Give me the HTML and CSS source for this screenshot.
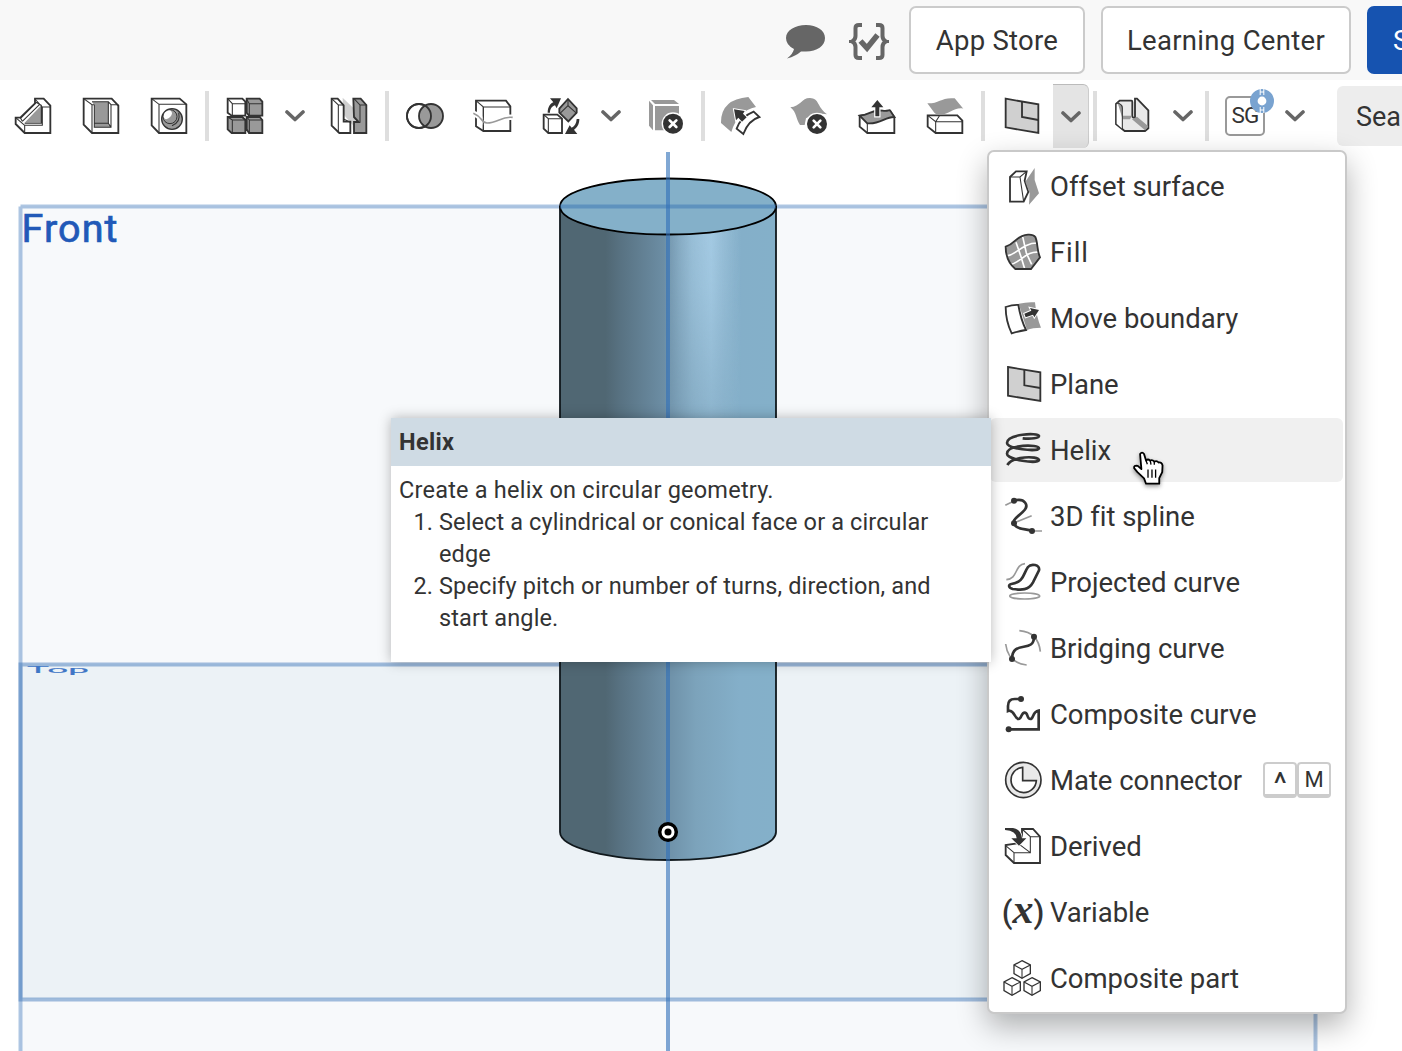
FILE: index.html
```html
<!DOCTYPE html>
<html lang="en">
<head>
<meta charset="utf-8">
<title>Part Studio</title>
<link rel="stylesheet" href="styles.css">
</head>
<body>
<div class="app">
<header class="topbar">
  <svg class="topicon" viewBox="0 0 40 40"><path d="M20 5C31 5 39 10.500 39 18C39 26 31 31.500 20 31.500L15 31.500Q10 36 1 38.500Q7 34 8 29Q0 25 0 18C0 10.500 9 5 20 5Z" fill="#666"/></svg>
  <svg class="topicon checks" viewBox="0 0 40 40"><g fill="none" stroke="#666" stroke-width="4"><path d="M13 5H10Q6.500 5 6.500 8V16Q6.500 20 3 21.500Q6.500 23 6.500 27V35Q6.500 38 10 38H13M27 5H30Q33.500 5 33.500 8V16Q33.500 20 37 21.500Q33.500 23 33.500 27V35Q33.500 38 30 38H27"/><path d="M11.500 21L18 28L28.500 15" stroke-width="5.500"/></g><path d="M0 20H5V23H0ZM35 20H40V23H35Z" fill="#666"/></svg>
  <button class="btn app-store">App Store</button>
  <button class="btn learning">Learning Center</button>
  <button class="btn share">Share</button>
</header>

<nav class="toolbar">
  <span class="tool"><svg viewBox="39 48 120 120"><path class="w" d="M105 56H131L151 77V159H74L47 132V113H61L105 70Z"/><path class="g" d="M124 76V128H74Z"/><path class="n" d="M61 116L108 68M67 124L119 73M61 113L67 124M105 57L127 81H151M127 81V136H74V159M47 113L74 136M74 130H124V76L108 67"/></svg></span>
  <span class="tool"><svg viewBox="243 48 120 120"><path class="w" d="M251 56H335L355 77V159H276L251 134Z"/><path class="g" d="M276 65H325V135L333 142H283V76Z"/><path class="n" d="M251 56L276 74H283M276 74V159M276 65H325L333 74H355M283 74V142H333V74M325 65V130H283M325 130L333 142"/></svg></span>
  <span class="tool"><svg viewBox="447 48 120 120"><path class="w" d="M455 56H539L559 73V159H477L455 136Z"/><path class="n" d="M455 56L477 73H559M477 73V159"/><circle cx="516" cy="117" r="31" fill="#999" stroke="#333" stroke-width="4"/><circle cx="510" cy="110" r="21" fill="#999" stroke="#333" stroke-width="3"/><path d="M491 111Q490 95 507 91Q516 92 516 101Q512 114 498 118Q492 116 491 111Z" fill="#fff"/><path class="n" d="M536 98Q543 127 516 137"/></svg></span>
  <i class="sep"></i>
  <span class="tool"><svg viewBox="675 48 120 120"><path class="w" d="M683 56H727L736 65V107H695L683 98Z"/><path class="gs" d="M740 56H779L787 65V107H747L740 98ZM683 111H727L736 120V159H695L683 148ZM740 111H779L787 120V159H747L740 148Z"/><path class="n" d="M683 56L697 71H736M697 71V106M740 58L748 71H787M748 71V106M683 111L697 120H736M697 120V159M740 111L748 120H787M748 120V159"/></svg></span>
  <span class="chev"><svg viewBox="0 0 20 12"><path d="M2 2L10 9.500L18 2"/></svg></span>
  <span class="tool"><svg viewBox="987 48 120 120"><path d="M1028 53L1067 91V130L1058 150V135L1030 103Z" fill="#cfcfcf"/><path class="w" d="M995 56H1013L1031 76V125H1051V159H1018L995 137Z"/><path class="gs" d="M1060 56H1082L1099 75V159H1062V126H1076L1062 111Z"/><path class="n" d="M995 56L1015 75H1031M1015 75V159M1032 118L1051 127M1062 56L1080 75H1099M1080 75V127"/></svg></span>
  <i class="sep"></i>
  <span class="tool"><svg viewBox="45 48 120 120"><circle cx="87" cy="108" r="36" class="w"/><circle cx="123" cy="108" r="36" class="gs"/><circle cx="87" cy="108" r="36" class="d"/></svg></span>
  <span class="tool"><svg viewBox="249 48 120 120"><path class="w" d="M258 62H348L361 79V153H280L258 139Z"/><path class="n" d="M258 62L280 81H361M280 81V153"/><path d="M250 100C280 112 272 129 291 129C324 129 335 108 368 112" fill="none" stroke="#fff" stroke-width="16"/><path d="M280 81V153" class="n"/><path d="M250 100C280 112 272 129 291 129C324 129 335 108 368 112" fill="none" stroke="#999" stroke-width="5"/></svg></span>
  <span class="tool"><svg viewBox="453 48 120 120"><path class="w" d="M461 104H502L516 116V159H475L461 146Z"/><path class="n" d="M461 104L475 116H516M475 116V159"/><path class="gs" d="M534 57L560 85V98L535 124L508 98V86Z"/><path class="n" d="M534 57V77L560 100M534 77L510 100"/><path d="M473 98C473 82 481 70 490 67L480 55H513L500 85L495 76C484 80 480 88 480 98ZM568 117C568 134 560 144 552 149L562 162H525L539 136L545 143C555 138 559 130 560 117Z" fill="#333"/></svg></span>
  <span class="chev"><svg viewBox="0 0 20 12"><path d="M2 2L10 9.500L18 2"/></svg></span>
  <span class="tool"><svg viewBox="765 48 120 120"><path d="M777 62L789 76V151L777 137ZM783 60H852L867 72H795ZM795 78H867V151H795Z" fill="#999"/><circle cx="849" cy="131" r="34" fill="#fff"/><circle cx="849" cy="131" r="30" fill="#333"/><path d="M839 121L859 141M859 121L839 141" stroke="#fff" stroke-width="8" stroke-linecap="round"/></svg></span>
  <i class="sep"></i>
  <span class="tool"><svg viewBox="63 48 120 120"><path d="M145 51L168 81Q113 92 94 156L63 129Q62 58 145 51Z" fill="#999"/><path class="w" d="M161 95L178 111Q145 121 130 162L110 146Q123 110 161 95Z"/><path d="M102 88L134 93L129 101L140 112L126 125L115 113L108 121Z" fill="#333" stroke="#fff" stroke-width="6" paint-order="stroke"/></svg></span>
  <span class="tool"><svg viewBox="267 48 120 120"><path d="M271 82C301 80 306 53 330 54C358 55 349 78 381 103L350 100L318 115L314 135H300C287 116 291 98 271 82Z" fill="#999"/><circle cx="351" cy="132" r="34" fill="#fff"/><circle cx="351" cy="132" r="30" fill="#333"/><path d="M341 122L361 142M361 122L341 142" stroke="#fff" stroke-width="8" stroke-linecap="round"/></svg></span>
  <span class="tool"><svg viewBox="471 48 120 120"><path class="w" d="M479 107V140L502 159H583V111L569 92Z"/><path class="gs" d="M479 107C510 105 514 88 548 92C562 95 568 89 570 91L583 111C555 110 541 134 502 130Z"/><path class="n" d="M502 130V159"/><path d="M532 60L550 82H538V109H526V82H514Z" fill="#333" stroke="#fff" stroke-width="7" paint-order="stroke"/></svg></span>
  <span class="tool"><svg viewBox="675 48 120 120"><path class="w" d="M683 106H772L787 122V159H707L683 140Z"/><path class="n" d="M683 106L707 125H787M707 125V159M707 125L718 108"/><path d="M682 70C718 71 724 51 764 55L790 86C764 80 745 106 718 105C706 106 703 98 682 70Z" fill="#999"/></svg></span>
  <i class="sep"></i>
  <span class="tool"><svg viewBox="903 48 120 120"><path d="M917 56L1015 73V159L917 142Z" fill="#d0d0d0" stroke="#333" stroke-width="5.500"/><path d="M966 65V111L1015 120" fill="none" stroke="#333" stroke-width="5.500"/></svg></span>
  <span class="chev active"><svg viewBox="0 0 20 12"><path d="M2 2L10 9.500L18 2"/></svg></span>
  <i class="sep"></i>
  <span class="tool"><svg viewBox="69 48 120 120"><path d="M78 72L89 62H124Q127 62 127 66V108Q128 115 135 113V56H141L175 91V145L165 153H104L78 132Z" fill="#e9e9e9" stroke="#333" stroke-width="5.500"/><path d="M80 72L97 83V146L80 131Z" fill="#fff"/><path d="M82 66L98 77V107H126L120 118H98ZM141 110L175 139L165 151L126 118Z" fill="#999"/><path class="n" d="M81 68Q97 72 97 84V147"/></svg></span>
  <span class="chev"><svg viewBox="0 0 20 12"><path d="M2 2L10 9.500L18 2"/></svg></span>
  <i class="sep"></i>
  <span class="tool"><span class="sg">SG<svg class="ring" viewBox="0 0 24 24"><circle cx="12" cy="12" r="8.200" fill="#fff" stroke="#79a3d0" stroke-width="7.600"/><path d="M10.200 0V6M13.800 0V6M10.200 18V24M13.800 18V24M10 3H14M10 21H14" stroke="#fff" stroke-width="1"/></svg></span></span>
  <span class="chev"><svg viewBox="0 0 20 12"><path d="M2 2L10 9.500L18 2"/></svg></span>
  <span class="search">Search tools...</span>
</nav>

<main class="stage">
  <svg class="scene" viewBox="0 152 1402 899">
    <defs>
      <linearGradient id="body"><stop offset="0" stop-color="#506773"/><stop offset=".21" stop-color="#506773"/><stop offset=".28" stop-color="#587282"/><stop offset=".49" stop-color="#6d8fa6"/><stop offset=".63" stop-color="#7ca3bb"/><stop offset=".83" stop-color="#84afc9"/><stop offset="1" stop-color="#84b0c9"/></linearGradient>
      <linearGradient id="shine"><stop offset=".48" stop-color="#a9cfe8" stop-opacity="0"/><stop offset=".61" stop-color="#a9cfe8" stop-opacity=".65"/><stop offset=".7" stop-color="#a9cfe8" stop-opacity=".9"/><stop offset=".84" stop-color="#a9cfe8" stop-opacity="0"/></linearGradient>
      <linearGradient id="down" x2="0" y2="1"><stop offset="0" stop-color="#fff"/><stop offset=".25" stop-color="#ddd"/><stop offset=".75" stop-color="#444"/><stop offset="1" stop-color="#000"/></linearGradient>
      <mask id="fade"><rect x="560" y="206" width="216" height="320" fill="url(#down)"/></mask>
    </defs>
    <rect x="20" y="206" width="1296" height="900" fill="#f7f9fb"/>
    <rect x="20" y="664" width="1296" height="335" fill="#ecf2f6"/>
    <g fill="none" stroke="#3e78bb">
      <path d="M20.500 206.500H1315.500V1051M20.500 206.500V1051" stroke-width="4" opacity=".42"/>
      <path d="M1315.500 664.500H20.500V999.500H1315.500" stroke-width="4" opacity=".48"/>
    </g>
    <path d="M560 206A108 28 0 0 1 776 206V832A108 28 0 0 1 560 832Z" fill="url(#body)"/>
    <rect x="560" y="206" width="216" height="320" fill="url(#shine)" mask="url(#fade)"/>
    <path d="M560 206V832A108 28 0 0 0 776 832V206" fill="none" stroke="#10181c" stroke-width="1.800"/>
    <ellipse cx="668" cy="206.500" rx="108" ry="28" fill="#84b0c9" stroke="#000" stroke-width="1.800"/>
    <path d="M560 206.500H776" stroke="#3a75b5" stroke-width="4" opacity=".5"/>
    <path d="M668 152V1051" stroke="#2f6fb9" stroke-width="4" opacity=".6"/>
    <circle cx="668" cy="832" r="8.300" fill="#fff" stroke="#000" stroke-width="3.500"/><circle cx="668" cy="832" r="3.500"/>
    <text class="plane front" x="21.500" y="241.500" textLength="96">Front</text>
    <text class="plane" transform="translate(27 673) scale(1 .27)" font-size="31" textLength="62" lengthAdjust="spacingAndGlyphs">Top</text>
  </svg>
</main>

<ul class="menu">
  <li><svg viewBox="54 48 120 120"><path class="w" d="M75 81L93 64H125L119 92L130 126L116 155H75Z"/><path class="n" d="M75 81H105L125 64M105 81L116 155"/><path d="M149 54V90L162 130L132 164L134 130L121 95Z" fill="#999"/></svg><span>Offset surface</span></li>
  <li><svg viewBox="54 246 120 120"><path d="M62 290C93 281 90 258 129 254Q145 253 151 261C159 278 155 300 165 322L138 357H91C73 342 62 319 62 290Z" fill="#999"/><path d="M64 317C91 319 111 278 158 279M76 344C110 336 124 301 164 307M93 277L108 320L119 356M113 260L124 309L140 343" fill="none" stroke="#fff" stroke-width="5"/><path class="d" d="M62 290C93 281 90 258 129 254Q145 253 151 261C159 278 155 300 165 322L138 357H91C73 342 62 319 62 290Z"/></svg><span class="fill">Fill</span></li>
  <li><svg viewBox="54 444 120 120"><path d="M101 461Q128 455 150 457Q154 500 168 533Q143 533 126 540Z" fill="#999"/><path class="w" d="M62 471Q84 464 100 465Q107 507 123 540Q103 543 80 550Q62 513 62 471Z"/><path d="M118 491L139 482L135 474L162 480L148 502L144 494L122 502Z" fill="#333" stroke="#fff" stroke-width="6" paint-order="stroke"/></svg><span>Move boundary</span></li>
  <li><svg viewBox="54 642 120 120"><path d="M69 651L166 667V753L69 737Z" fill="#d0d0d0" stroke="#333" stroke-width="5.500"/><path d="M118 660V706L166 714" fill="none" stroke="#333" stroke-width="5.500"/></svg><span>Plane</span></li>
  <li class="hover"><svg viewBox="54 45 120 120"><path d="M113 70C139 73 162 69 162 63C158 52 66 57 66 84C66 102 157 111 162 100C161 87 66 88 66 116C66 134 157 148 162 135C158 122 82 123 67 150" fill="none" stroke="#333" stroke-width="8"/></svg><span>Helix</span></li>
  <li><svg viewBox="54 243 120 120"><path d="M61 271L87 258M87 324L140 302M140 348H171" stroke="#999" stroke-width="5" fill="none"/><path d="M87 257C119 248 136 271 113 291C91 310 79 318 90 331C101 344 119 341 141 347" fill="none" stroke="#333" stroke-width="8"/><g fill="#333"><circle cx="87" cy="257" r="9"/><circle cx="87" cy="325" r="9"/><circle cx="141" cy="348" r="9"/></g></svg><span>3D fit spline</span></li>
  <li><svg viewBox="54 441 120 120"><path d="M64 494C100 492 87 449 120 446" fill="none" stroke="#999" stroke-width="5"/><ellipse cx="119" cy="543" rx="45" ry="9" fill="none" stroke="#999" stroke-width="5"/><path d="M79 507C119 500 113 478 129 456C138 445 166 448 162 466L144 502C131 526 110 526 83 522C70 518 69 509 79 507Z" fill="none" stroke="#333" stroke-width="8"/></svg><span>Projected curve</span></li>
  <li><svg viewBox="54 639 120 120"><path d="M103 647Q160 652 166 710M62 687Q69 744 125 750" fill="none" stroke="#999" stroke-width="5"/><path d="M81 732C82 672 147 717 147 665" fill="none" stroke="#333" stroke-width="8"/><circle cx="147" cy="665" r="9" fill="#333"/><circle cx="81" cy="732" r="9" fill="#333"/></svg><span>Bridging curve</span></li>
  <li><svg viewBox="54 42 120 120"><path d="M108 57H89Q69 57 69 78V93C88 86 88 117 101 117C110 117 108 98 119 98C130 98 125 117 136 117C147 117 141 95 161 92V148H71" fill="none" stroke="#333" stroke-width="8"/><circle cx="108" cy="57" r="9" fill="#333"/><circle cx="71" cy="148" r="9" fill="#333"/></svg><span>Composite curve</span></li>
  <li><svg viewBox="54 240 120 120"><circle cx="115" cy="300" r="53" fill="#e9e9e9" stroke="#333" stroke-width="5"/><path d="M113 262A38 38 0 1 0 154 302H113Z" fill="#fff" stroke="#333" stroke-width="5"/></svg><span>Mate connector</span><kbd class="first"><b class="caret">^</b></kbd><kbd>M</kbd></li>
  <li><svg viewBox="54 438 120 120"><path class="w" d="M111 447H144L165 470V549H87L62 525V495L96 490L111 475Z"/><path class="n" d="M111 447L136 470H165M136 470V518H87V549M62 497L87 518M104 494L136 518"/><path d="M60 444H84Q108 447 111 475H124L102 497L79 475H95Q94 452 60 450Z" fill="#333" stroke="#fff" stroke-width="5" paint-order="stroke"/></svg><span>Derived</span></li>
  <li><span class="varicon">(<i>x</i>)</span><span>Variable</span></li>
  <li><svg viewBox="54 834 120 120"><g id="box"><path d="M111 842L136 855V881L111 895L87 881V855Z" fill="#fff" stroke="#333" stroke-width="4"/><path class="n" d="M87 855L111 868L136 855M111 868V895"/></g><use href="#box" x="-30" y="51"/><use href="#box" x="30" y="51"/></svg><span>Composite part</span></li>
</ul>

<aside class="tip">
  <h2>Helix</h2>
  <div class="tipbody"><p>Create a helix on circular geometry.</p>
  <ol><li>Select a cylindrical or conical face or a circular edge</li><li>Specify pitch or number of turns, direction, and start angle.</li></ol></div>
</aside>

<svg class="cursor" viewBox="442 105 102 112"><path d="M466 117Q472 109 478 117L484 137Q490 131 496 137Q503 133 509 140Q517 136 522 143Q532 141 534 152L533 172L524 190V207H484L478 191L458 172L448 160Q446 151 459 153L470 163Z" fill="#fff" stroke="#000" stroke-width="5.500" stroke-linejoin="round"/><path d="M490 164V189M502 164V189M513 164V189M484 137L488 148M497 137L499 149M509 141V150" stroke="#000" stroke-width="4"/></svg>
</div>
</body>
</html>
```
FILE: styles.css
```css
* { box-sizing: border-box; }
body { margin: 0; background: #fff; color: #333; font-family: Roboto, "Liberation Sans", sans-serif; }
.app { position: relative; width: 1402px; height: 1051px; overflow: hidden; display: flex; flex-direction: column; }

.topbar { flex: none; height: 80px; background: #f8f8f8; display: flex; align-items: flex-start; justify-content: flex-end; padding-top: 6px; margin-right: -74px; }
.topicon { width: 40px; height: 40px; margin-top: 14px; margin-right: 23px; }
.topicon.checks { margin-right: 20px; }
.btn { flex: none; height: 68px; border: 2px solid #cbcbcb; border-radius: 7px; background: #fff; color: #333; font: 27.5px Roboto, sans-serif; padding: 0; white-space: nowrap; margin-right: 16px; }
.app-store { width: 176px; letter-spacing: .25px; }
.learning { width: 250px; letter-spacing: .3px; }
.share { width: 109px; margin-right: 0; background: #1653b0; border-color: #1653b0; color: #fff; text-align: left; padding-left: 24px; }

.toolbar { flex: none; height: 72px; display: flex; align-items: center; margin-left: -1px; background: #fff; }
.tool { flex: none; width: 68px; height: 72px; display: flex; align-items: center; justify-content: center; }
.tool > svg { width: 40px; height: 40px; }
.sep { flex: none; width: 4px; height: 50px; margin: 0 2px; background: #dedede; }
.chev { flex: none; width: 36px; height: 64px; padding-right: 4px; display: flex; align-items: center; justify-content: center; }
.chev svg { width: 20px; height: 12px; }
.chev path { fill: none; stroke: #666; stroke-width: 3.6; stroke-linecap: round; stroke-linejoin: round; }
.chev.active { margin: 0 2px 0 -2px; padding-right: 0; background: #e4e4e4; border-top: 1px solid #bbb; border-right: 1px solid #ccc; border-radius: 0 6px 6px 0; }
.sg { position: relative; width: 40px; height: 40px; border: 2px solid #999; border-radius: 5px; font-size: 22.5px; line-height: 34px; text-align: center; letter-spacing: -.8px; }
.ring { position: absolute; left: 23px; top: -9px; width: 24px; height: 24px; }
.search { flex: none; width: 120px; height: 60px; margin-left: 22px; padding-left: 19px; border-radius: 6px; background: #ededed; font-size: 27px; line-height: 62px; white-space: nowrap; overflow: hidden; }

.w { fill: #fff; stroke: #333; stroke-width: 5.5; }
.g { fill: #999; }
.gs { fill: #999; stroke: #333; stroke-width: 5.5; }
.d { fill: none; stroke: #333; stroke-width: 5.5; }
.n { fill: none; stroke: #333; stroke-width: 3.2; }

.stage { flex: 1; min-height: 0; }
.scene { display: block; width: 1402px; height: 899px; }
.plane { fill: #3f76c6; stroke: #3f76c6; stroke-width: .5px; font-family: Roboto, sans-serif; }
.front { fill: #2159b8; stroke: #2159b8; stroke-width: .7px; font-size: 39.5px; }

.menu { position: absolute; left: 987px; top: 150px; width: 360px; height: 864px; margin: 0; padding: 2px 2px 0 1px; list-style: none; display: flex; flex-direction: column; gap: 2px; background: #fff; border: 2px solid #c9c9c9; border-radius: 7px; box-shadow: 0 12px 30px rgba(0, 0, 0, .3); }
.menu > li { height: 64px; padding-left: 13px; display: flex; align-items: center; border-radius: 6px; font-size: 27.5px; white-space: nowrap; letter-spacing: -.03px; }
.menu .fill { letter-spacing: .9px; }
.menu svg { flex: none; width: 40px; height: 40px; margin-right: 7px; }
.hover { background: #f0f0f0; }
kbd { width: 34px; height: 36px; border: 2px solid #ccc; border-bottom-width: 4px; border-radius: 4px; font: 22px/31px Roboto, sans-serif; text-align: center; }
kbd.first { margin-left: 21px; }
.caret { display: block; font-size: 32px; line-height: 38px; font-weight: 400; }
.varicon { width: 40px; margin-right: 7px; display: flex; justify-content: center; align-items: center; font-size: 31px; font-weight: 500; letter-spacing: 0; }
.varicon i { font: italic bold 42px/32px "Liberation Serif", serif; margin: -7px 0 0; }

.tip { position: absolute; left: 391px; top: 418px; width: 600px; height: 243.5px; background: #fff; box-shadow: 0 0 12px rgba(0, 0, 0, .28); font-size: 23.5px; line-height: 32px; }
.tip h2 { margin: 0; height: 48px; padding-left: 8px; background: #cfdbe4; font-size: 23.5px; line-height: 48px; font-weight: 700; letter-spacing: .3px; }
.tipbody { padding: 8px; letter-spacing: .22px; }
.tip p, .tip ol { margin: 0; }
.tip ol { padding-left: 40px; letter-spacing: .12px; }
.cursor { position: absolute; left: 1132px; top: 450px; width: 34px; height: 37px; filter: drop-shadow(0 2px 2px rgba(0, 0, 0, .4)); }
```
